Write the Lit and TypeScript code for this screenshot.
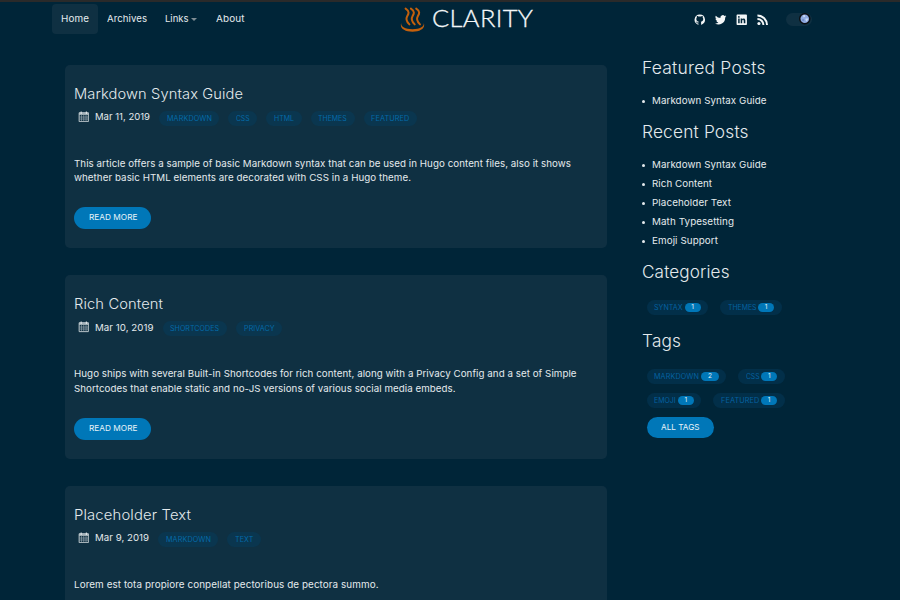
import { LitElement, html, css, svg, nothing } from "lit";
import { customElement, property, state } from "lit/decorators.js";

/** A single line of text, widened and tracked so that it fills the given width. */
@customElement("fit-text")
class FitText extends LitElement {
  @property() text = "";
  @property({ type: Number }) w = 0;
  @state() spacing = 0;
  @state() stretch = 1;

  static styles = css`
    :host { display: block; flex: none; white-space: pre; }
    .line { display: block; white-space: pre; }
    .measure { display: inline-block; transform-origin: 0 50%; }
  `;

  async firstUpdated() {
    await document.fonts.ready;
    const el = this.renderRoot.querySelector(".measure") as HTMLElement;
    const natural = el.getBoundingClientRect().width;
    const ratio = this.w / natural;
    this.stretch = 1 + (ratio - 1) * 0.7;
    this.spacing = (this.w / this.stretch - natural) / Math.max(1, this.text.length - 1);
  }

  render() {
    return html`<span class="line" style="width:${this.w}px"
      ><span class="measure" style="letter-spacing:${this.spacing}px;transform:scaleX(${this.stretch})">${this.text}</span></span>`;
  }
}

type Label = [string, number];
interface Post { title: Label; date: Label; tags: Label[]; body: Label[]; more: boolean }

const posts: Post[] = [
  {
    title: ["Markdown Syntax Guide", 169],
    date: ["Mar 11, 2019", 55],
    tags: [["MARKDOWN", 45], ["CSS", 13.5], ["HTML", 20], ["THEMES", 28.7], ["FEATURED", 38.3]],
    body: [
      ["This article offers a sample of basic Markdown syntax that can be used in Hugo content files, also it shows", 497],
      ["whether basic HTML elements are decorated with CSS in a Hugo theme.", 337],
    ],
    more: true,
  },
  {
    title: ["Rich Content", 89],
    date: ["Mar 10, 2019", 58.5],
    tags: [["SHORTCODES", 49], ["PRIVACY", 30.7]],
    body: [
      ["Hugo ships with several Built-in Shortcodes for rich content, along with a Privacy Config and a set of Simple", 502.5],
      ["Shortcodes that enable static and no-JS versions of various social media embeds.", 381.5],
    ],
    more: true,
  },
  {
    title: ["Placeholder Text", 117],
    date: ["Mar 9, 2019", 54],
    tags: [["MARKDOWN", 45], ["TEXT", 18.3]],
    body: [["Lorem est tota propiore conpellat pectoribus de pectora summo.", 304.5]],
    more: false,
  },
];

const recent: Label[] = [
  ["Markdown Syntax Guide", 114.5],
  ["Rich Content", 60],
  ["Placeholder Text", 79],
  ["Math Typesetting", 82],
  ["Emoji Support", 66],
];

const t = (l: Label) => html`<fit-text .text=${l[0]} .w=${l[1]}></fit-text>`;

const calendar = svg`<svg class="cal" viewBox="0 0 20 20">
  <path d="M2 3h16v15.5H2z" fill="none" stroke="#c9d2d6" stroke-width="1.6"/>
  <path d="M2 3h16v4H2z" fill="#c9d2d6" opacity=".75"/>
  <path d="M5.5 1v4M14.5 1v4" stroke="#e6ebed" stroke-width="1.8"/>
  <path d="M2 10.5h16M2 14h16M6 7v11M10 7v11M14 7v11" stroke="#9fb0b8" stroke-width="1.1"/>
</svg>`;

@customElement("app-root")
class AppRoot extends LitElement {
  static styles = css`
    * { box-sizing: border-box; }
    :host {
      display: block; width: 900px; height: 600px; overflow: hidden;
      background: #002538; color: #e4eaed; border-top: 2px solid #2a2a2a;
      font-family: Inter, "Open Sans", sans-serif; font-size: 9.5px;
      box-sizing: border-box;
    }
    header { display: flex; height: 34px; align-items: center; padding-left: 52px; }
    .nav { display: flex; align-items: center; width: 348px; height: 34px; line-height: 30px; }
    .home { height: 30px; width: 45.5px; padding-left: 9px; border-radius: 4px; background: #0f3042; }
    .archives { margin-left: 9.5px; }
    .links { margin-left: 17.5px; }
    .about { margin-left: 18.5px; }
    .caret { width: 0; height: 0; margin: 1px 0 0 3px; border: 3px solid transparent; border-top: 3.5px solid #7f8d94; border-bottom: 0; }
    .brand { display: flex; align-items: center; width: 294px; gap: 6px; height: 34px; }
    .steam { width: 26px; height: 27px; margin-top: 0; }
    .name { font-family: Lato, sans-serif; font-weight: 300; font-size: 24px; line-height: 30px; margin-top: -2px; color: #f4f7f8; -webkit-text-stroke: .3px #f4f7f8; }
    .social { display: flex; align-items: center; gap: 9.5px; width: 91.5px; height: 34px; padding-top: 1px; }
    .social svg { width: 11.5px; height: 11.5px; fill: #f3f6f7; flex: none; }
    .toggle { display: flex; justify-content: flex-end; align-items: center; width: 26.5px; height: 13px; border-radius: 7px; background: #0f3042; padding-right: 1.5px; }
    .knob { width: 11.5px; height: 11.5px; }
    main { display: flex; gap: 36px; padding: 28.5px 0 0 65.4px; }
    .posts { display: flex; flex-direction: column; gap: 27.3px; width: 541.2px; flex: none; }
    .card { height: 183.4px; border-radius: 5px; background: #0f3042; padding: 19px 9px 0; flex: none; }
    .title { font-size: 14.2px; font-weight: 300; line-height: 20px; }
    .meta { display: flex; height: 24px; padding: 3px 0 0 4px; align-items: flex-start; line-height: 20px; }
    .cal { width: 11.5px; height: 11.5px; margin: 4px 5.5px 0 0; flex: none; }
    .meta > fit-text { margin-top: .4px; }
    .tags { display: flex; gap: 9px; margin: 4.1px 0 0 8.7px; }
    .tag { display: flex; align-items: center; height: 15px; padding: 0 7.7px; border-radius: 8px; background: #0a364f; color: #046aa8; font-size: 7px; line-height: 15px; }
    .body { margin-top: 29px; height: 50.6px; line-height: 14.5px; }
    .btn { display: flex; align-items: center; justify-content: center; width: 77px; height: 21.8px; border-radius: 11px; background: #0077b8; color: #e8f3f9; font-size: 8.2px; line-height: 20px; padding-bottom: 1px; }
    aside { width: 160px; margin-left: -.2px; }
    h2 { margin: 0; font-size: 16.6px; font-weight: 300; line-height: 20px; }
    .featured { margin-top: -6.6px; }
    .list { margin: 13px 0 12px; padding: 0; list-style: none; }
    .list li { display: flex; align-items: center; height: 19px; }
    .list li::before { content: ""; width: 3px; height: 3px; border-radius: 50%; background: #e4eaed; margin: 1.5px 6.2px 0 0; }
    .pills { display: flex; flex-wrap: wrap; gap: 8.8px 11.8px; padding-left: 4.2px; margin-top: 17.8px; }
    .pills .tag { background: #022f49; color: #0461a0; height: 15.2px; gap: 2px; }
    .badge { display: flex; justify-content: center; width: 15.8px; height: 8.8px; line-height: 8.8px; border-radius: 5px; background: #0077b8; color: #e8f3f9; font-size: 6.5px; }
    .badge.wide { width: 17.5px; }
    .heading-tags { margin-top: 16.2px; }
    .all { width: 67px; margin: 8.6px 0 0 4.2px; }
  `;

  private pill(l: Label, n: number) {
    return html`<div class="tag">${t(l)}<span class="badge ${n > 1 ? "wide" : ""}">${n}</span></div>`;
  }

  render() {
    return html`
      <header>
        <nav class="nav">
          <div class="home">${t(["Home", 28])}</div>
          <div class="archives">${t(["Archives", 40])}</div>
          <div class="links">${t(["Links", 23.5])}</div>
          <div class="caret"></div>
          <div class="about">${t(["About", 28.5])}</div>
        </nav>
        <div class="brand">
          <svg class="steam" viewBox="0 0 26 27" fill="none" stroke="#c4600c" stroke-linecap="round">
            <path stroke-width="2" d="M5.600 2.600C9.800 5.400 8.800 7.600 7.200 10.300S6.400 15.500 9.400 18.400M10.900 2.600C15.100 5.400 14.100 7.600 12.500 10.300S11.700 15.500 14.700 18.400M16.200 2.600C20.400 5.400 19.400 7.600 17.800 10.300S17 15.500 20 18.400"/>
            <path stroke="none" fill="#c4600c" d="M1.200 17C.8 20.500 4.500 23.200 12.500 23.200S24.200 20.500 23.800 17C25.600 22 20.500 25.700 12.500 25.700S-.6 22 1.200 17Z"/>
          </svg>
          <div class="name">${t(["CLARITY", 101])}</div>
        </div>
        <div class="social">
          <svg viewBox="0 0 16 16"><path d="M8 .7a7.300 7.300 0 0 0-2.300 14.200c.4.1.5-.2.500-.4v-1.400c-2 .4-2.500-.9-2.600-1.200-.1-.2-.5-.9-.8-1.100-.3-.1-.7-.5 0-.5.600 0 1.100.6 1.200.8.7 1.200 1.800.9 2.300.7.1-.5.3-.9.5-1.100-1.700-.2-3.600-.9-3.600-3.800 0-.8.3-1.500.8-2-.1-.2-.4-1 .1-2 0 0 .7-.3 2.100.7a7 7 0 0 1 3.700 0c1.400-1 2.100-.7 2.100-.7.4 1 .1 1.800.1 2 .5.500.8 1.200.8 2 0 2.900-1.800 3.600-3.500 3.800.3.200.5.700.5 1.400v2.400c0 .2.100.5.500.4A7.300 7.300 0 0 0 8 .7Z"/></svg>
          <svg viewBox="0 0 24 24"><path d="M23.600 4.900a9.600 9.600 0 0 1-2.700.8 4.800 4.800 0 0 0 2.100-2.700c-.9.6-2 1-3.100 1.200a4.800 4.800 0 0 0-8.300 4.400A13.700 13.700 0 0 1 1.700 3.500a4.800 4.800 0 0 0 1.500 6.500c-.8 0-1.500-.2-2.200-.6v.1c0 2.300 1.700 4.300 3.900 4.700-.7.200-1.500.2-2.200.1a4.800 4.800 0 0 0 4.500 3.300A9.700 9.700 0 0 1 0 19.600 13.700 13.700 0 0 0 21.200 7.400a10 10 0 0 0 2.400-2.500Z"/></svg>
          <svg viewBox="0 0 16 16"><path fill-rule="evenodd" d="M1.800.8h12.400c.6 0 1 .4 1 1v12.400c0 .6-.4 1-1 1H1.800c-.6 0-1-.4-1-1V1.800c0-.6.4-1 1-1ZM3 6.200v6.700h2.100V6.200H3Zm1-3.300a1.200 1.200 0 1 0 0 2.400 1.200 1.200 0 0 0 0-2.400Zm2.500 3.300v6.700h2.100V9.600c0-2 2.200-2 2.200 0v3.300H13V9c0-3.400-3.400-3.500-4.300-1.900v-.9H6.500Z"/></svg>
          <svg viewBox="0 0 16 16"><circle cx="2.700" cy="13.200" r="2.200"/><path d="M.6 5.600v2.700a7 7 0 0 1 7 7h2.700a9.700 9.700 0 0 0-9.700-9.700ZM.6.700v2.700a12 12 0 0 1 12 11.900h2.700A14.700 14.700 0 0 0 .6.700Z"/></svg>
        </div>
        <div class="toggle">
          <svg class="knob" viewBox="0 0 12 12"><circle cx="6" cy="6" r="6" fill="#0c0e12"/><circle cx="6" cy="6" r="4.500" fill="#8ea9df"/><path d="M4 2.500l2-.4.5 1.500-1.600 1zM6.500 6l2.500-.5.5 1.500-2 2z" fill="#cbd9f5"/><circle cx="4.300" cy="7.300" r="1.100" fill="#718bc4"/></svg>
        </div>
      </header>
      <main>
        <section class="posts">
          ${posts.map((p) => html`
            <article class="card">
              <div class="title">${t(p.title)}</div>
              <div class="meta">
                ${calendar}${t(p.date)}
                <div class="tags">${p.tags.map((g) => html`<div class="tag">${t(g)}</div>`)}</div>
              </div>
              <div class="body">${p.body.map(t)}</div>
              ${p.more ? html`<div class="btn">${t(["READ MORE", 48.5])}</div>` : nothing}
            </article>`)}
        </section>
        <aside>
          <h2 class="featured">${t(["Featured Posts", 123.5])}</h2>
          <ul class="list"><li>${t(recent[0])}</li></ul>
          <h2>${t(["Recent Posts", 106.5])}</h2>
          <ul class="list">${recent.map((r) => html`<li>${t(r)}</li>`)}</ul>
          <h2>${t(["Categories", 87.5])}</h2>
          <div class="pills">${this.pill(["SYNTAX", 28.5], 1)}${this.pill(["THEMES", 28.5], 1)}</div>
          <h2 class="heading-tags">${t(["Tags", 39])}</h2>
          <div class="pills">
            ${this.pill(["MARKDOWN", 45], 2)}${this.pill(["CSS", 13.5], 1)}
            ${this.pill(["EMOJI", 21.7], 1)}${this.pill(["FEATURED", 38.3], 1)}
          </div>
          <div class="btn all">${t(["ALL TAGS", 38.5])}</div>
        </aside>
      </main>`;
  }
}
